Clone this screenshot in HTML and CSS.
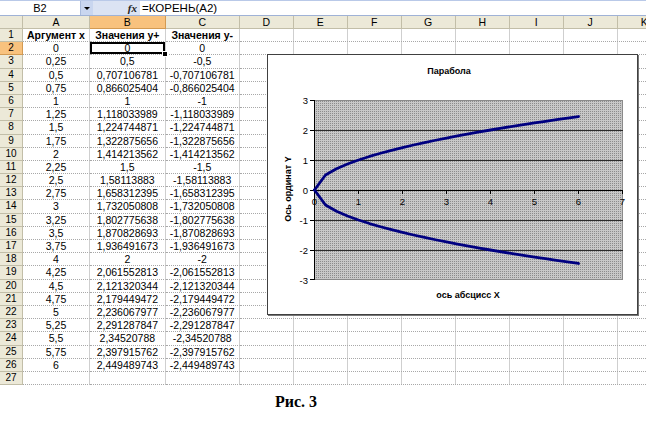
FILE: index.html
```html
<!DOCTYPE html>
<html lang="ru">
<head>
<meta charset="utf-8">
<title>Рис. 3</title>
<link rel="stylesheet" href="styles.css">
</head>
<body>
<div class="page">
  <div class="fbar">
    <div class="namebox">B2</div>
    <div class="dd"><span class="tri"></span></div>
    <div class="fxzone"><span class="fx">fx</span></div>
    <div class="formula">=КОРЕНЬ(А2)</div>
  </div>
  <div class="sheet">
    <div class="corner"></div><div class="ch">A</div><div class="ch sel">B</div><div class="ch">C</div><div class="ch">D</div><div class="ch">E</div><div class="ch">F</div><div class="ch">G</div><div class="ch">H</div><div class="ch">I</div><div class="ch">J</div><div class="ch">K</div>
    <div class="rh">1</div><div class="c b">Аргумент x</div><div class="c b">Значения y+</div><div class="c b">Значения y-</div><div class="rest"></div>
    <div class="rh sel">2</div><div class="c">0</div><div class="c active">0</div><div class="c">0</div><div class="rest"></div>
    <div class="rh">3</div><div class="c">0,25</div><div class="c">0,5</div><div class="c">-0,5</div><div class="rest"></div>
    <div class="rh">4</div><div class="c">0,5</div><div class="c">0,707106781</div><div class="c">-0,707106781</div><div class="rest"></div>
    <div class="rh">5</div><div class="c">0,75</div><div class="c">0,866025404</div><div class="c">-0,866025404</div><div class="rest"></div>
    <div class="rh">6</div><div class="c">1</div><div class="c">1</div><div class="c">-1</div><div class="rest"></div>
    <div class="rh">7</div><div class="c">1,25</div><div class="c">1,118033989</div><div class="c">-1,118033989</div><div class="rest"></div>
    <div class="rh">8</div><div class="c">1,5</div><div class="c">1,224744871</div><div class="c">-1,224744871</div><div class="rest"></div>
    <div class="rh">9</div><div class="c">1,75</div><div class="c">1,322875656</div><div class="c">-1,322875656</div><div class="rest"></div>
    <div class="rh">10</div><div class="c">2</div><div class="c">1,414213562</div><div class="c">-1,414213562</div><div class="rest"></div>
    <div class="rh">11</div><div class="c">2,25</div><div class="c">1,5</div><div class="c">-1,5</div><div class="rest"></div>
    <div class="rh">12</div><div class="c">2,5</div><div class="c">1,58113883</div><div class="c">-1,58113883</div><div class="rest"></div>
    <div class="rh">13</div><div class="c">2,75</div><div class="c">1,658312395</div><div class="c">-1,658312395</div><div class="rest"></div>
    <div class="rh">14</div><div class="c">3</div><div class="c">1,732050808</div><div class="c">-1,732050808</div><div class="rest"></div>
    <div class="rh">15</div><div class="c">3,25</div><div class="c">1,802775638</div><div class="c">-1,802775638</div><div class="rest"></div>
    <div class="rh">16</div><div class="c">3,5</div><div class="c">1,870828693</div><div class="c">-1,870828693</div><div class="rest"></div>
    <div class="rh">17</div><div class="c">3,75</div><div class="c">1,936491673</div><div class="c">-1,936491673</div><div class="rest"></div>
    <div class="rh">18</div><div class="c">4</div><div class="c">2</div><div class="c">-2</div><div class="rest"></div>
    <div class="rh">19</div><div class="c">4,25</div><div class="c">2,061552813</div><div class="c">-2,061552813</div><div class="rest"></div>
    <div class="rh">20</div><div class="c">4,5</div><div class="c">2,121320344</div><div class="c">-2,121320344</div><div class="rest"></div>
    <div class="rh">21</div><div class="c">4,75</div><div class="c">2,179449472</div><div class="c">-2,179449472</div><div class="rest"></div>
    <div class="rh">22</div><div class="c">5</div><div class="c">2,236067977</div><div class="c">-2,236067977</div><div class="rest"></div>
    <div class="rh">23</div><div class="c">5,25</div><div class="c">2,291287847</div><div class="c">-2,291287847</div><div class="rest"></div>
    <div class="rh">24</div><div class="c">5,5</div><div class="c">2,34520788</div><div class="c">-2,34520788</div><div class="rest"></div>
    <div class="rh">25</div><div class="c">5,75</div><div class="c">2,397915762</div><div class="c">-2,397915762</div><div class="rest"></div>
    <div class="rh">26</div><div class="c">6</div><div class="c">2,449489743</div><div class="c">-2,449489743</div><div class="rest"></div>
    <div class="rh">27</div><div class="c"></div><div class="c"></div><div class="c"></div><div class="rest"></div>
  </div>

  <div class="chart">
    <svg class="plot" width="369" height="259" viewBox="0 0 369 259">
      <defs>
        <pattern id="dots" width="2" height="2" patternUnits="userSpaceOnUse">
          <rect width="2" height="2" fill="#c8c8c8"/>
          <rect width="1" height="1" fill="#8c8c8c"/>
        </pattern>
      </defs>
      <text class="ttl" x="181" y="19" text-anchor="middle">Парабола</text>
      <rect x="47" y="45" width="308" height="180" fill="url(#dots)"/>
      <g class="grid">
        <line x1="47" y1="45.5" x2="355" y2="45.5" class="edge"/>
        <line x1="47" y1="224.5" x2="355" y2="224.5" class="edge"/>
        <line x1="354.5" y1="45" x2="354.5" y2="225" class="edge"/>
        <line x1="47" y1="75.5" x2="355" y2="75.5"/>
        <line x1="47" y1="105.5" x2="355" y2="105.5"/>
        <line x1="47" y1="165.5" x2="355" y2="165.5"/>
        <line x1="47" y1="195.5" x2="355" y2="195.5"/>
      </g>
      <g class="axis">
        <line x1="46.5" y1="45" x2="46.5" y2="225"/>
        <line x1="46" y1="135.5" x2="355" y2="135.5"/>
        <line x1="42" y1="45.5" x2="46" y2="45.5"/>
        <line x1="42" y1="75.5" x2="46" y2="75.5"/>
        <line x1="42" y1="105.5" x2="46" y2="105.5"/>
        <line x1="42" y1="135.5" x2="46" y2="135.5"/>
        <line x1="42" y1="165.5" x2="46" y2="165.5"/>
        <line x1="42" y1="195.5" x2="46" y2="195.5"/>
        <line x1="42" y1="224.5" x2="46" y2="224.5"/>
        <line x1="46.5" y1="136" x2="46.5" y2="139"/>
        <line x1="90.5" y1="136" x2="90.5" y2="139"/>
        <line x1="134.5" y1="136" x2="134.5" y2="139"/>
        <line x1="178.5" y1="136" x2="178.5" y2="139"/>
        <line x1="222.5" y1="136" x2="222.5" y2="139"/>
        <line x1="266.5" y1="136" x2="266.5" y2="139"/>
        <line x1="310.5" y1="136" x2="310.5" y2="139"/>
        <line x1="354.5" y1="136" x2="354.5" y2="139"/>
      </g>
      <g class="lbl" text-anchor="end">
        <text x="40" y="48.5">3</text>
        <text x="40" y="78.5">2</text>
        <text x="40" y="108.5">1</text>
        <text x="40" y="138.5">0</text>
        <text x="40" y="168.5">-1</text>
        <text x="40" y="198.5">-2</text>
        <text x="40" y="228.5">-3</text>
      </g>
      <g class="lbl" text-anchor="middle">
        <text x="46.5" y="150">0</text>
        <text x="90.5" y="150">1</text>
        <text x="134.5" y="150">2</text>
        <text x="178.5" y="150">3</text>
        <text x="222.5" y="150">4</text>
        <text x="266.5" y="150">5</text>
        <text x="310.5" y="150">6</text>
        <text x="354.5" y="150">7</text>
      </g>
      <polyline class="series" points="46.5,135 57.5,120 68.5,113.79 79.5,109.02 90.5,105 101.5,101.46 112.5,98.26 123.5,95.31 134.5,92.57 145.5,90 156.5,87.57 167.5,85.25 178.5,83.04 189.5,80.92 200.5,78.87 211.5,76.91 222.5,75 233.5,73.15 244.5,71.36 255.5,69.62 266.5,67.92 277.5,66.26 288.5,64.64 299.5,63.06 310.5,61.52"/>
      <polyline class="series" points="46.5,135 57.5,150 68.5,156.21 79.5,160.98 90.5,165 101.5,168.54 112.5,171.74 123.5,174.69 134.5,177.43 145.5,180 156.5,182.43 167.5,184.75 178.5,186.96 189.5,189.08 200.5,191.12 211.5,193.09 222.5,195 233.5,196.85 244.5,198.64 255.5,200.38 266.5,202.08 277.5,203.74 288.5,205.36 299.5,206.94 310.5,208.48"/>
      <text class="ttl" x="200" y="243" text-anchor="middle">ось абсцисс X</text>
      <text class="ttl" transform="translate(23 134) rotate(-90)" text-anchor="middle">Ось ординат Y</text>
    </svg>
  </div>

  <div class="caption">Рис. 3</div>
</div>
</body>
</html>
```

FILE: styles.css
```css
html, body {
  margin: 0;
  padding: 0;
  background: #ffffff;
}
body {
  width: 646px;
  height: 428px;
  overflow: hidden;
  font-family: "Liberation Sans", Arial, sans-serif;
  color: #000;
}
.page {
  position: relative;
  width: 646px;
  height: 428px;
  overflow: hidden;
}

/* formula bar */
.fbar {
  display: flex;
  height: 16px;
  box-sizing: border-box;
  background: #dbe3f3;
  border-top: 1px solid #b9c9e8;
  border-bottom: 1px solid #9fb2d6;
}
.namebox {
  width: 81px;
  background: #fff;
  font-size: 11px;
  line-height: 14px;
  text-align: center;
  box-sizing: border-box;
  border-right: 1px solid #a9bbdc;
}
.dd {
  width: 12px;
  display: flex;
  align-items: center;
  justify-content: center;
  background: #c9d6ef;
}
.tri {
  width: 0;
  height: 0;
  border-left: 3px solid transparent;
  border-right: 3px solid transparent;
  border-top: 3px solid #000;
}
.fxzone {
  width: 47px;
  display: flex;
  justify-content: flex-end;
  padding-right: 3px;
  box-sizing: border-box;
}
.fx {
  font-family: "Liberation Serif", "Times New Roman", serif;
  font-style: italic;
  font-weight: bold;
  font-size: 11px;
  line-height: 14px;
  color: #222;
}
.formula {
  flex: 1;
  background: #fff;
  font-size: 11.5px;
  line-height: 14px;
  padding-left: 2px;
}

/* sheet grid */
.sheet {
  display: grid;
  grid-template-columns: 23px 67px 75.7px 74px repeat(8, 54px);
  grid-template-rows: 13px repeat(27, 13.2px);
  width: 671.7px;
}
.corner, .ch, .rh {
  background: #ece9d8;
  box-sizing: border-box;
  border-right: 1px solid #c2bea8;
  border-bottom: 1px solid #c2bea8;
  font-size: 10.5px;
  text-align: center;
  line-height: 12px;
  overflow: hidden;
}
.rh {
  font-size: 10px;
  line-height: 12.2px;
}
.ch.sel, .rh.sel {
  background: #f8c27e;
  border-color: #d39a52;
}
.c {
  box-sizing: border-box;
  border-right: 1px solid #cfcfcf;
  border-bottom: 1px dotted #a8a8a8;
  font-size: 10.5px;
  line-height: 12.2px;
  text-align: center;
  white-space: nowrap;
  overflow: hidden;
}
.c.b {
  font-weight: bold;
}
.c.active {
  position: relative;
  overflow: visible;
  box-shadow: inset 0 0 0 2px #000;
}
.c.active::after {
  content: "";
  position: absolute;
  right: -3px;
  bottom: -3px;
  width: 4px;
  height: 4px;
  background: #000;
  border: 1px solid #fff;
}
.rest {
  grid-column: 5 / span 8;
  box-sizing: border-box;
  border-bottom: 1px dotted #a8a8a8;
  background-image: repeating-linear-gradient(to right, transparent 0 53px, #cfcfcf 53px 54px);
}

/* chart */
.chart {
  position: absolute;
  left: 267px;
  top: 54px;
  width: 371px;
  height: 261px;
  box-sizing: border-box;
  background: #fff;
  border: 1px solid #404040;
  box-shadow: 1px 1px 0 #777;
}
.plot {
  display: block;
}
.ttl {
  font-family: "Liberation Sans", Arial, sans-serif;
  font-weight: bold;
  font-size: 9px;
  fill: #000;
}
.lbl {
  font-family: "Liberation Sans", Arial, sans-serif;
  font-size: 9.5px;
  fill: #000;
}
.grid line {
  stroke: #2a2a2a;
  stroke-width: 1;
  shape-rendering: crispEdges;
}
.grid line.edge {
  stroke: #8a8a8a;
}
.axis line {
  stroke: #000;
  stroke-width: 1;
  shape-rendering: crispEdges;
}
.series {
  fill: none;
  stroke: #000080;
  stroke-width: 2.8;
  stroke-linejoin: round;
  stroke-linecap: round;
}

/* caption */
.caption {
  margin-top: 8px;
  padding-left: 275px;
  font-family: "Liberation Serif", "Times New Roman", serif;
  font-weight: bold;
  font-size: 16px;
  line-height: 18px;
}
```
